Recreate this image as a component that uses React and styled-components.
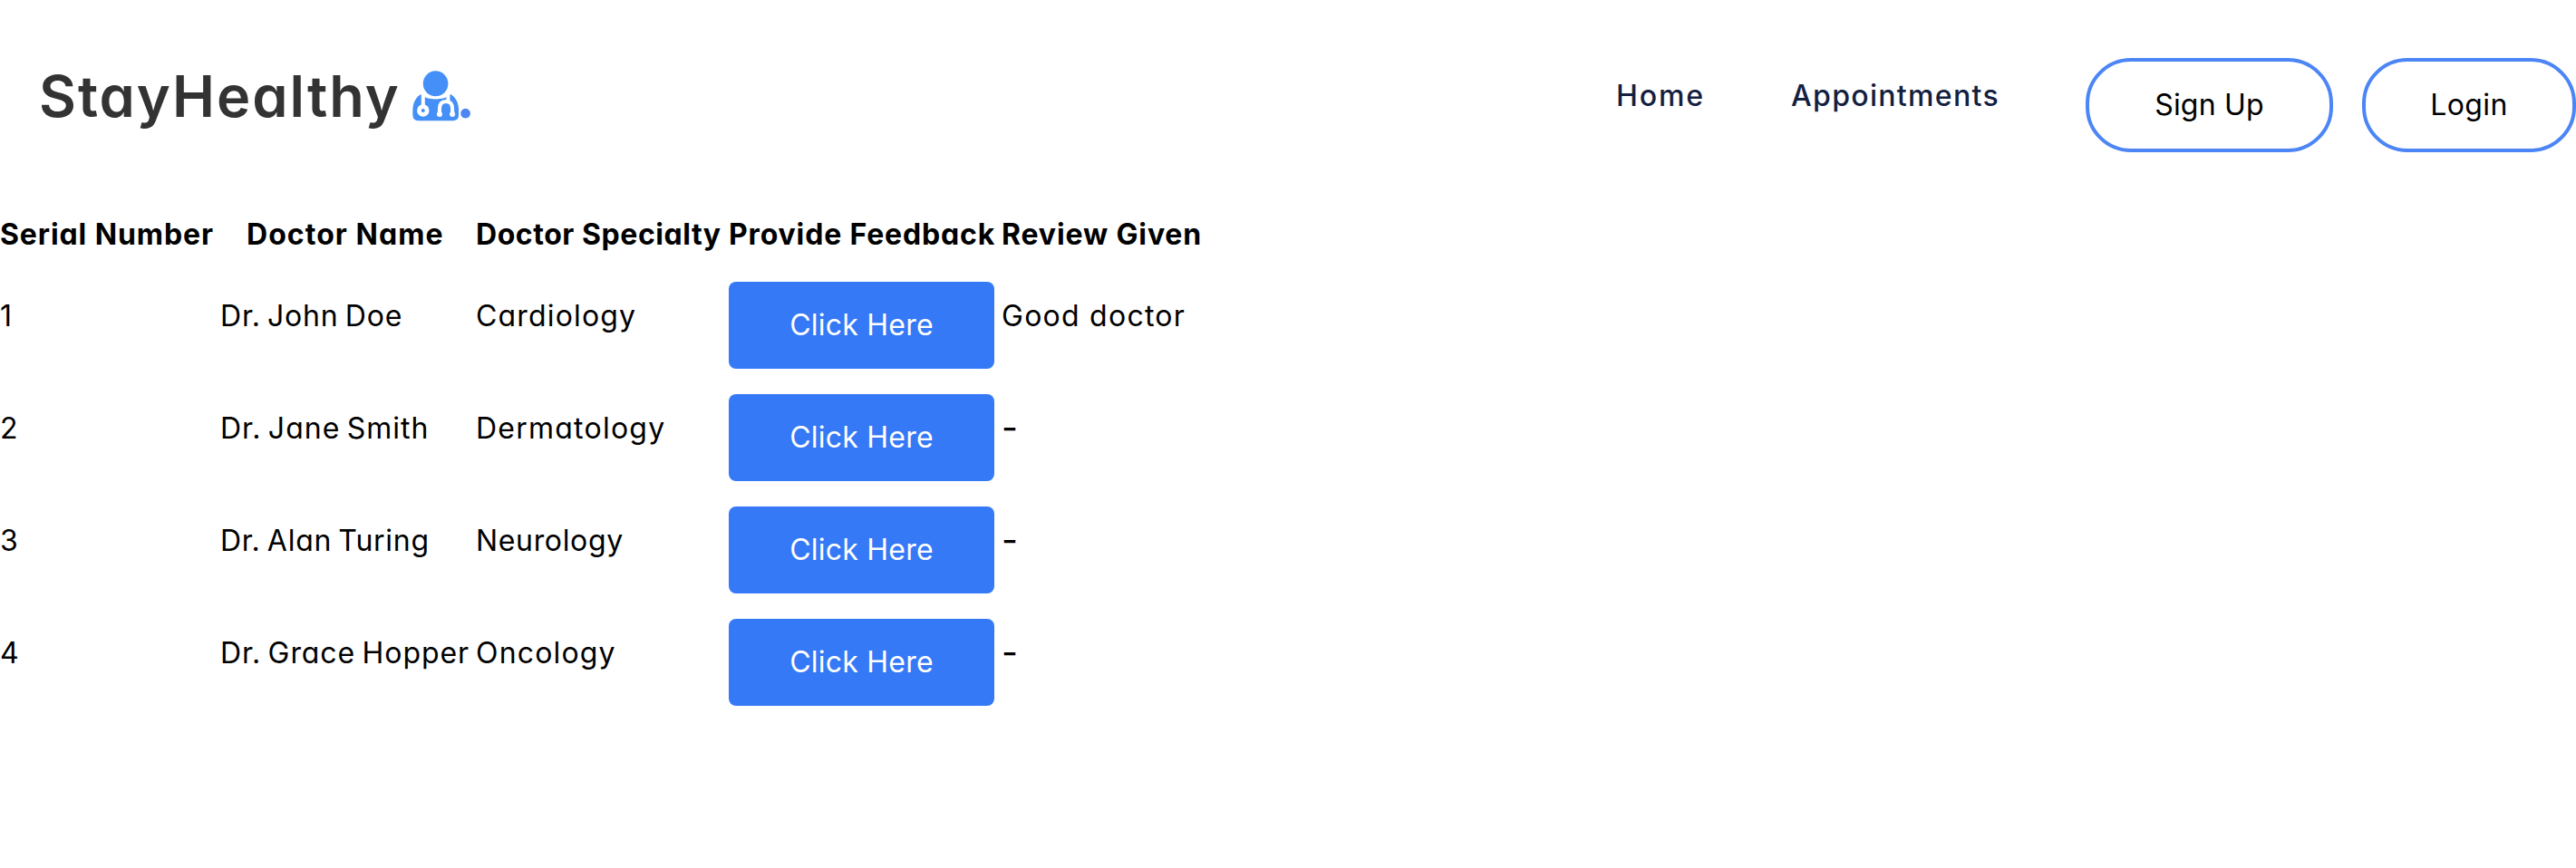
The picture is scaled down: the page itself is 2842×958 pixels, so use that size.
import React from "react";
import styled, { createGlobalStyle } from "styled-components";

const GlobalStyle = createGlobalStyle`
  body {
    margin: 0;
    background: #fff;
    color: #000;
    font-family: Inter, "Liberation Sans", sans-serif;
    font-size: 32px;
    line-height: 48px;
    font-feature-settings: "cv11";
  }
`;

const Page = styled.div`
  min-height: 958px;
  overflow: hidden;
`;

const Nav = styled.nav`
  display: flex;
  justify-content: space-between;
  align-items: flex-start;
  height: 235px;
  box-sizing: border-box;
  padding: 58px 0 0 43px;
`;

const Logo = styled.div`
  display: flex;
  align-items: flex-start;
  color: #333;
  font-size: 63px;
  font-weight: 600;
  line-height: 96px;
`;

const LogoName = styled.span`
  width: 411.7px;
  letter-spacing: 1.98px;
  white-space: nowrap;
`;

const DoctorIcon = styled.svg`
  display: block;
  width: 51.5px;
  height: 56px;
  margin-top: 20px;
`;

const LogoDot = styled.span`
  margin: -3px 0 0 -1px;
  color: #4e85f4;
  font-family: Lato, sans-serif;
  font-size: 70px;
  font-weight: 700;
`;

const Menu = styled.div`
  display: flex;
  align-items: flex-start;
  padding-top: 6px;
`;

const MenuLink = styled.a`
  width: ${(p) => p.$width}px;
  margin: 18px 96px 0 0;
  color: #13203f;
  font-weight: 500;
  letter-spacing: ${(p) => p.$track}px;
  white-space: nowrap;
`;

const PillButton = styled.button`
  width: ${(p) => p.$width}px;
  height: 104px;
  box-sizing: border-box;
  padding: 0;
  border: 4px solid #4c85f5;
  border-radius: 50px;
  background: transparent;
  color: #000;
  font: inherit;
  font-feature-settings: inherit;
  letter-spacing: ${(p) => p.$track}px;

  & + & {
    margin-left: 32px;
  }
`;

const Table = styled.div`
  display: grid;
  row-gap: 28px;
`;

const Row = styled.div`
  display: grid;
  grid-template-columns: 243px 282px 279px 301px 230px;
  height: ${(p) => (p.$head ? 48 : 96)}px;
`;

const HeadCell = styled.div`
  padding-left: ${(p) => p.$indent || 0}px;
  font-weight: 700;
  letter-spacing: ${(p) => p.$track}px;
  white-space: nowrap;
`;

const Cell = styled.div`
  padding-top: 14px;
  letter-spacing: ${(p) => p.$track || 0}px;
  white-space: nowrap;
`;

const NameCell = styled(Cell)`
  word-spacing: -2.5px;
`;

const EmptyCell = styled(Cell)`
  padding-top: 13px;
  font-size: 39px;
`;

const FeedbackButton = styled.button`
  width: 293px;
  height: 96px;
  padding: 0;
  border: 0;
  border-radius: 8px;
  background: #3579f7;
  color: #fff;
  font: inherit;
  font-feature-settings: inherit;
  letter-spacing: 0.22px;
`;

const heads = [
  { text: "Serial Number", track: 0.9 },
  { text: "Doctor Name", track: 1.05, indent: 29 },
  { text: "Doctor Specialty", track: 0.55 },
  { text: "Provide Feedback", track: 0.85 },
  { text: "Review Given", track: 0.87 },
];

const doctors = [
  { name: "Dr. John Doe", nameTrack: 0.8, field: "Cardiology", fieldTrack: 1.16, review: "Good doctor" },
  { name: "Dr. Jane Smith", nameTrack: 1, field: "Dermatology", fieldTrack: 1.24, review: "-" },
  { name: "Dr. Alan Turing", nameTrack: 0.74, field: "Neurology", fieldTrack: 0.65, review: "-" },
  { name: "Dr. Grace Hopper", nameTrack: 0.93, field: "Oncology", fieldTrack: 1.16, review: "-" },
];

function Doctor() {
  return (
    <DoctorIcon viewBox="76 54 153 168" preserveAspectRatio="none" aria-hidden="true">
      <path
        fill="#458ff8"
        d="M104 132C88 141 77 160 77 187V200Q77 220 99 220H206Q228 220 228 200V187C228 160 217 141 201 132C190 144 171 148 152 148S115 144 104 132Z"
      />
      <circle cx="152" cy="97" r="47" fill="#fff" />
      <ellipse cx="152" cy="97" rx="41" ry="42" fill="#458ff8" />
      <g fill="none" stroke="#fff" strokeWidth="12">
        <path d="M111 128V172" />
        <path d="M193 128V158" />
        <path d="M165 200V181C165 163 173 156 186 156S207 163 207 181V200" />
      </g>
      <path d="M117 130Q134 144 152 144T187 130" fill="none" stroke="#fff" strokeWidth="7" />
      <circle cx="111" cy="186" r="20" fill="#fff" />
      <circle cx="111" cy="186" r="6" fill="#458ff8" />
      <circle cx="165" cy="198" r="9" fill="#fff" />
      <circle cx="207" cy="198" r="9" fill="#fff" />
    </DoctorIcon>
  );
}

export default function App() {
  return (
    <Page>
      <GlobalStyle />
      <Nav>
        <Logo>
          <LogoName>StayHealthy</LogoName>
          <Doctor />
          <LogoDot>.</LogoDot>
        </Logo>
        <Menu>
          <MenuLink $width={97} $track={1.9}>Home</MenuLink>
          <MenuLink $width={229} $track={1.33}>Appointments</MenuLink>
          <PillButton $width={273} $track={0.2}>Sign Up</PillButton>
          <PillButton $width={236} $track={0.35}>Login</PillButton>
        </Menu>
      </Nav>
      <Table>
        <Row $head>
          {heads.map((h) => (
            <HeadCell key={h.text} $track={h.track} $indent={h.indent}>
              {h.text}
            </HeadCell>
          ))}
        </Row>
        {doctors.map((d, i) => (
          <Row key={d.name}>
            <Cell>{i + 1}</Cell>
            <NameCell $track={d.nameTrack}>{d.name}</NameCell>
            <Cell $track={d.fieldTrack}>{d.field}</Cell>
            <FeedbackButton>Click Here</FeedbackButton>
            {d.review === "-" ? <EmptyCell>-</EmptyCell> : <Cell $track={1.25}>{d.review}</Cell>}
          </Row>
        ))}
      </Table>
    </Page>
  );
}
